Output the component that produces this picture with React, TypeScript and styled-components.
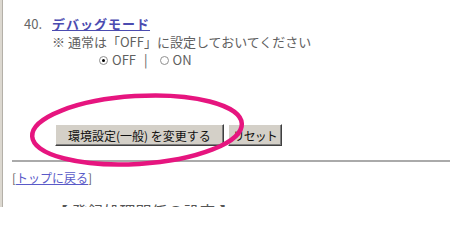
import React from 'react';
import styled, { createGlobalStyle } from 'styled-components';

const GlobalStyle = createGlobalStyle`
  html, body {
    margin: 0;
    padding: 0;
    background: #fff;
    overflow: hidden;
  }
  body {
    font-family: "Noto Sans CJK JP", "Noto Sans", sans-serif;
    font-size: 12px;
    color: #555;
  }
`;

const Frame = styled.div`
  position: relative;
  height: 207px;
  border-left: 2px solid #dcd8d0;
`;

const Inner = styled.div`
  height: 100%;
  border-left: 1px solid #b4b0a8;
  padding-top: 15px;
  box-sizing: border-box;
`;

const Item = styled.div`
  display: flex;
  padding-left: 21px;
  line-height: 18px;
`;

const Num = styled.span`
  width: 28px;
  font-size: 13px;
  color: #666;
`;

const Body = styled.div`
  display: flex;
  flex-direction: column;
`;

const Title = styled.a`
  align-self: flex-start;
  font-size: 13px;
  font-weight: bold;
  letter-spacing: 1px;
  color: #4b4bb0;
  text-decoration: underline;
`;

const Note = styled.div`
  font-size: 13px;
  color: #606060;
`;

const Choices = styled.div`
  display: flex;
  align-items: center;
  gap: 4px;
  padding-left: 47px;
  font-size: 13px;
  color: #606060;
`;

const Radio = styled.span<{ $checked?: boolean }>`
  position: relative;
  width: 7px;
  height: 7px;
  border: 1px solid #909090;
  border-radius: 50%;
  background: #fff;
  &::after {
    content: '';
    display: ${(p) => (p.$checked ? 'block' : 'none')};
    position: absolute;
    left: 2px;
    top: 2px;
    width: 3px;
    height: 3px;
    border-radius: 50%;
    background: #000;
  }
`;

const Sep = styled.span`
  margin: 0 8px 0 4px;
`;

const Actions = styled.div`
  display: flex;
  gap: 4px;
  margin: 55px 0 0 52px;
`;

const Button = styled.button<{ $tight?: boolean }>`
  height: 22px;
  padding: 0 ${(p) => (p.$tight ? '4px' : '12px')};
  background: #d4d0c8;
  border: 1px solid;
  border-color: #fff #404040 #404040 #fff;
  box-shadow: inset -1px -1px #808080;
  font-family: "Noto Sans CJK JP", sans-serif;
  font-size: 12px;
  letter-spacing: ${(p) => (p.$tight ? '-1px' : '0')};
  color: #111;
`;

const Rule = styled.hr`
  margin: 14px 0 0 9px;
  border: none;
  border-top: 2px solid #aaa;
`;

const Back = styled.div`
  margin: 8px 0 0 9px;
  line-height: 16px;
  font-size: 12px;
  color: #606060;
`;

const BackLink = styled.a`
  color: #5a5ac8;
  text-decoration: underline;
`;

const Heading = styled.div`
  margin: 14px 0 0 49px;
  font-size: 16px;
  line-height: 22px;
  color: #555;
`;

const Mark = styled.svg`
  position: absolute;
  left: -2px;
  top: 0;
  pointer-events: none;
`;

export default function App() {
  return (
    <>
      <GlobalStyle />
      <Frame>
        <Inner>
          <Item>
            <Num>40.</Num>
            <Body>
              <Title href="#">デバッグモード</Title>
              <Note>※ 通常は「OFF」に設定しておいてください</Note>
              <Choices>
                <Radio $checked />
                <span>OFF</span>
                <Sep>|</Sep>
                <Radio />
                <span>ON</span>
              </Choices>
            </Body>
          </Item>
          <Actions>
            <Button>環境設定(一般) を変更する</Button>
            <Button $tight>リセット</Button>
          </Actions>
          <Rule />
          <Back>
            [<BackLink href="#">トップに戻る</BackLink>]
          </Back>
          <Heading>【 登録処理関係の設定 】</Heading>
        </Inner>
        <Mark width="450" height="207" viewBox="0 0 450 207">
          <ellipse
            cx="137"
            cy="130"
            rx="105"
            ry="34"
            transform="rotate(-3.5 137 130)"
            fill="none"
            stroke="#e6157f"
            strokeWidth="4.5"
          />
        </Mark>
      </Frame>
    </>
  );
}
